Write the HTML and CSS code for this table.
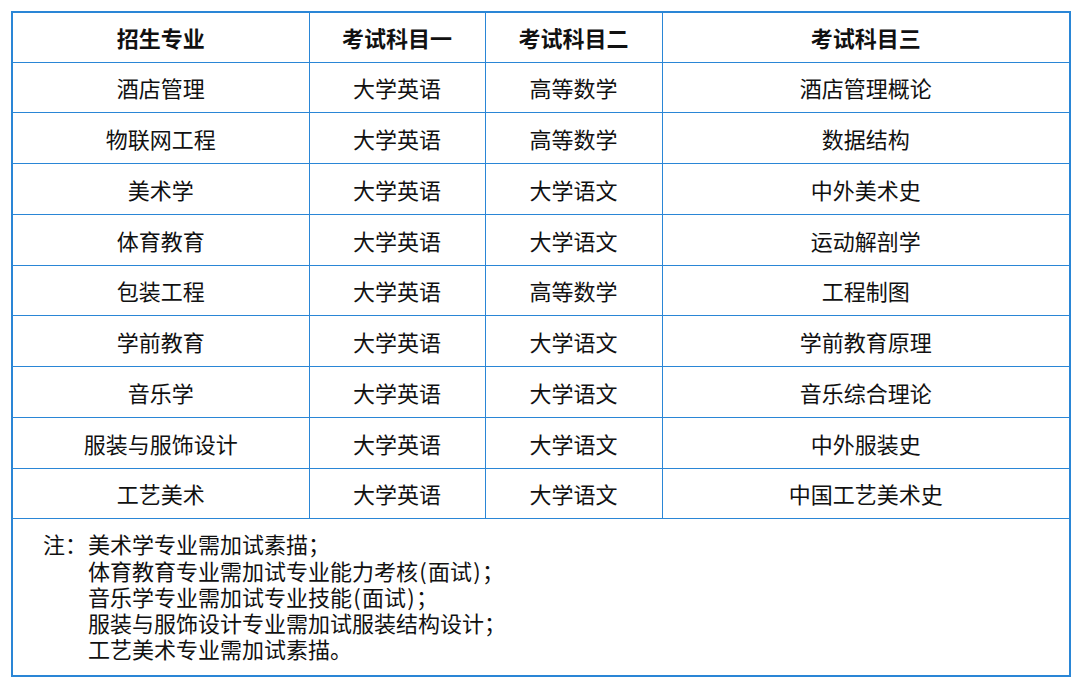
FILE: index.html
```html
<!DOCTYPE html>
<html lang="zh">
<head>
<meta charset="utf-8">
<link rel="stylesheet" href="styles.css">
</head>
<body>
<table class="exam">
  <colgroup>
    <col class="c1"><col class="c2"><col class="c3"><col class="c4">
  </colgroup>
  <thead>
    <tr><th>招生专业</th><th>考试科目一</th><th>考试科目二</th><th>考试科目三</th></tr>
  </thead>
  <tbody>
    <tr><td>酒店管理</td><td>大学英语</td><td>高等数学</td><td>酒店管理概论</td></tr>
    <tr><td>物联网工程</td><td>大学英语</td><td>高等数学</td><td>数据结构</td></tr>
    <tr><td>美术学</td><td>大学英语</td><td>大学语文</td><td>中外美术史</td></tr>
    <tr><td>体育教育</td><td>大学英语</td><td>大学语文</td><td>运动解剖学</td></tr>
    <tr><td>包装工程</td><td>大学英语</td><td>高等数学</td><td>工程制图</td></tr>
    <tr><td>学前教育</td><td>大学英语</td><td>大学语文</td><td>学前教育原理</td></tr>
    <tr><td>音乐学</td><td>大学英语</td><td>大学语文</td><td>音乐综合理论</td></tr>
    <tr><td>服装与服饰设计</td><td>大学英语</td><td>大学语文</td><td>中外服装史</td></tr>
    <tr><td>工艺美术</td><td>大学英语</td><td>大学语文</td><td>中国工艺美术史</td></tr>
    <tr class="notes-row">
      <td colspan="4" class="notes">
        <div class="notes-inner">
          <span class="label">注：</span>
          <div class="lines">
            <div>美术学专业需加试素描；</div>
            <div>体育教育专业需加试专业能力考核<span class="paren">(</span>面试<span class="paren">)</span>；</div>
            <div>音乐学专业需加试专业技能<span class="paren">(</span>面试<span class="paren">)</span>；</div>
            <div>服装与服饰设计专业需加试服装结构设计；</div>
            <div>工艺美术专业需加试素描。</div>
          </div>
        </div>
      </td>
    </tr>
  </tbody>
</table>
</body>
</html>
```
FILE: styles.css
```css
html, body {
  margin: 0;
  padding: 0;
  background: #ffffff;
}
body {
  padding: 11px 0 0 11px;
  font-family: "Noto Sans CJK SC", "Noto Sans", sans-serif;
  color: #111111;
}
.exam {
  border-collapse: collapse;
  table-layout: fixed;
  width: 1058px;
  border: 2px solid #2a86d6;
}
.c1 { width: 297px; }
.c2 { width: 176px; }
.c3 { width: 177px; }
.c4 { width: 408px; }
.exam th, .exam td {
  border: 1.5px solid #2a86d6;
  text-align: center;
  vertical-align: middle;
  font-size: 22px;
  line-height: 24px;
  padding: 0;
  height: 50.75px;
  box-sizing: border-box;
}
.exam th {
  font-weight: 700;
  height: 50px;
}
.exam td.notes {
  text-align: left;
  vertical-align: top;
  height: 157px;
  padding: 11px 0 0 30px;
}
.notes-inner {
  display: flex;
  align-items: flex-start;
}
.label {
  width: 45px;
  flex: none;
  line-height: 26.3px;
}
.lines div {
  line-height: 26.3px;
}
.paren {
  display: inline-block;
  width: 10px;
  text-align: center;
}
```
